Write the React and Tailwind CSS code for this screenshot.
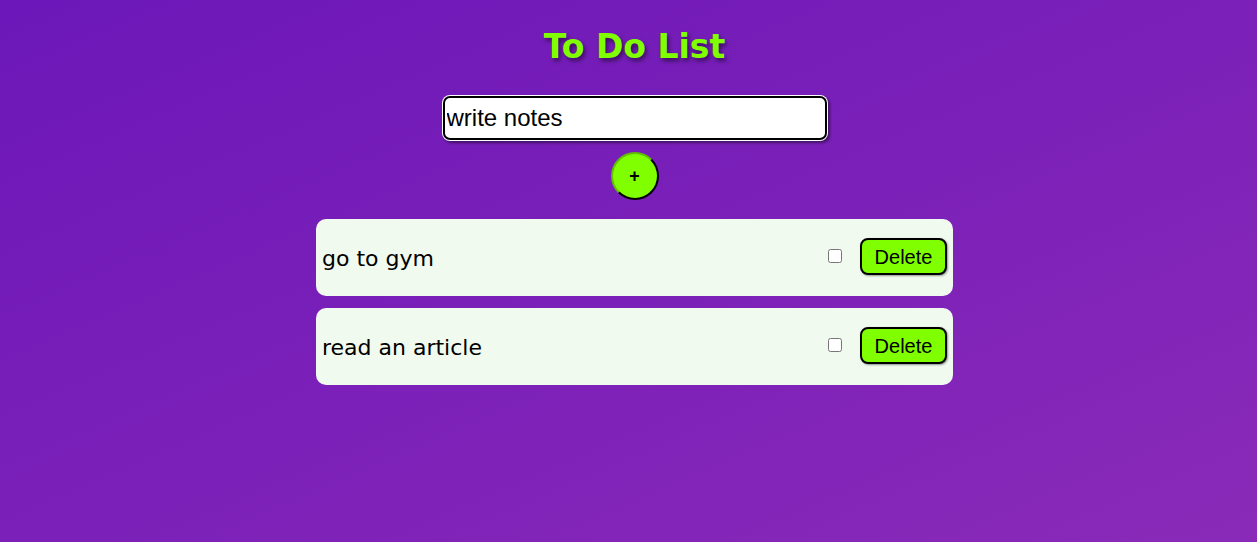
export default function App() {
  const items = ["go to gym", "read an article"];
  return (
    <div className="min-h-[542px] w-full bg-[linear-gradient(to_bottom_right,#6c17b9,#8a2ab8)] flex flex-col items-center pl-[12px]" style={{ fontFamily: '"Trebuchet MS", "DejaVu Sans", sans-serif' }}>
      <h1 className="mt-[26px] text-[33px] font-bold leading-[42px] text-[#7fff00] [text-shadow:2px_3px_4px_rgba(0,0,0,0.5)]">To Do List</h1>
      <input
        defaultValue="write notes"
        className="mt-[28px] w-[384px] h-[44px] rounded-[7px] border-2 border-black bg-white px-[2px] text-[24px] text-black shadow-[0_0_0_1px_#ffffff,2px_2px_3px_1px_rgba(0,0,0,0.45)] outline-none"
        style={{ fontFamily: '"Liberation Sans", Arial, sans-serif' }}
      />
      <button className="mt-[12px] w-[48px] h-[48px] rounded-full bg-[#7fff00] border-2 border-black border-t-[#5fbf00] border-l-[#5fbf00] text-[18px] font-bold text-black flex items-center justify-center" style={{ fontFamily: '"Liberation Sans", Arial, sans-serif' }}>+</button>
      <div className="mt-[19px] flex flex-col gap-[12px] w-[637px]">
        {items.map((t) => (
          <div key={t} className="h-[77px] rounded-[10px] bg-[#f0faef] flex items-center pl-[6px] pr-[6px]">
            <span className="flex-1 text-[22px] text-black pt-[2px]">{t}</span>
            <input type="checkbox" className="w-[14px] h-[14px] mr-[18px] -mt-[3px]" />
            <button className="w-[87px] h-[37px] rounded-[8px] border-2 border-black bg-[#7fff00] text-[20px] text-black shadow-[1px_1px_2px_rgba(0,0,0,0.4)] -mt-[2px]" style={{ fontFamily: '"Liberation Sans", Arial, sans-serif' }}>Delete</button>
          </div>
        ))}
      </div>
    </div>
  );
}
